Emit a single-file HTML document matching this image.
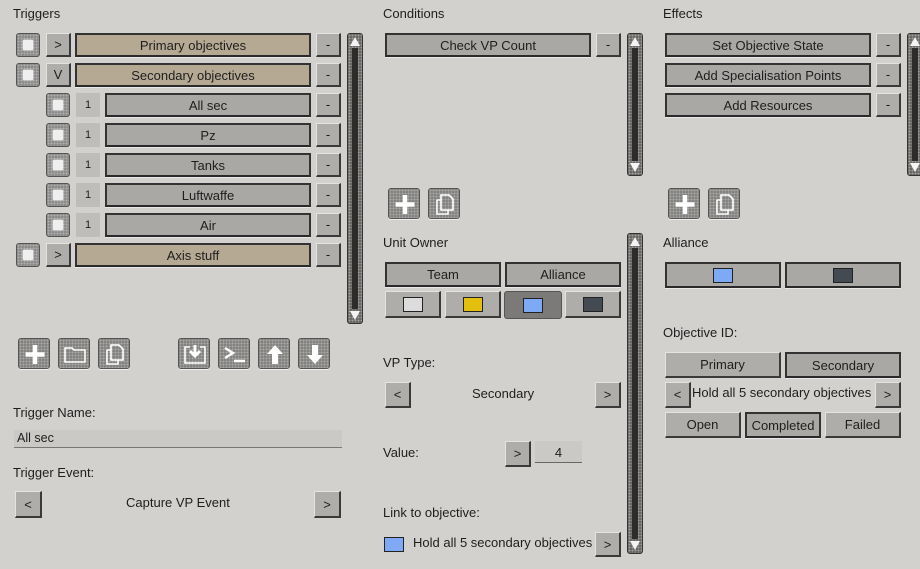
<!DOCTYPE html>
<html><head><meta charset="utf-8"><style>
body{margin:0;width:920px;height:569px;background:#d3d1ce;font-family:"Liberation Sans","DejaVu Sans",sans-serif;font-size:13px;color:#1e1e1e;position:relative;overflow:hidden}
div{box-sizing:border-box;position:absolute}
.l{white-space:nowrap}
.r{background:#aeadaa;border-top:1px solid #e4e3e0;border-left:1px solid #e4e3e0;border-right:2px solid #3a3a3a;border-bottom:2px solid #3a3a3a;text-align:center;display:flex;align-items:center;justify-content:center;white-space:nowrap}
.p{background:#a9a8a5;border:2px solid #333;border-bottom-color:#2a2a2a;box-shadow:0 1px 0 #e8e8e8;text-align:center;display:flex;align-items:center;justify-content:center;white-space:nowrap}
.t{background:#b6a993}
.d{background:#7b7a78;border-radius:3px}
.n{background:#bebdba;border:none;text-align:center;display:flex;align-items:center;justify-content:center;font-size:11px}
.cb{width:24px;height:24px;background:#858482;background-image:radial-gradient(#b0b0b0 1px,transparent 1.2px);background-size:3px 3px;border:1px solid #555;border-radius:3px}
.cb::after{content:"";position:absolute;left:6px;top:6px;width:10px;height:10px;background:#efefef;box-shadow:0 0 2px #fff}
.sb{width:16px;background:#5e5c58;background-image:radial-gradient(#a0a0a0 1px,transparent 1.2px);background-size:3px 3px;border:1px solid #333;border-radius:3px}
.sb::before{content:"";position:absolute;left:4px;top:14px;bottom:14px;width:6px;background:#2d2c2a}
.ua,.da{position:absolute;left:2px;width:0;height:0;border-left:5px solid transparent;border-right:5px solid transparent}
.ua{top:3px;border-bottom:9px solid #f4f4f4}
.da{bottom:3px;border-top:9px solid #f4f4f4}
.ic{width:32px;height:31px;background:#7a7976;background-image:radial-gradient(#aaa 1px,transparent 1.3px);background-size:3px 3px;border-radius:3px;border:1px solid #555;box-shadow:0 1px 0 #eee}
.ic svg{position:absolute;left:3px;top:3px}
.sw{width:20px;height:15px;border:1px solid #222}
</style></head><body>

<div class="l" style="left:13px;top:6px">Triggers</div>
<div class="l" style="left:383px;top:6px">Conditions</div>
<div class="l" style="left:663px;top:6px">Effects</div>

<div class="cb" style="left:16px;top:33px"></div><div class="r" style="left:46px;top:33px;width:25px;height:24px">&gt;</div><div class="p t" style="left:75px;top:33px;width:236px;height:24px">Primary objectives</div><div class="r" style="left:316px;top:33px;width:25px;height:24px">-</div>
<div class="cb" style="left:16px;top:63px"></div><div class="r" style="left:46px;top:63px;width:25px;height:24px">V</div><div class="p t" style="left:75px;top:63px;width:236px;height:24px">Secondary objectives</div><div class="r" style="left:316px;top:63px;width:25px;height:24px">-</div>

<div class="cb" style="left:46px;top:93px"></div><div class="n" style="left:76px;top:93px;width:24px;height:24px">1</div><div class="p" style="left:105px;top:93px;width:206px;height:24px">All sec</div><div class="r" style="left:316px;top:93px;width:25px;height:24px">-</div>
<div class="cb" style="left:46px;top:123px"></div><div class="n" style="left:76px;top:123px;width:24px;height:24px">1</div><div class="p" style="left:105px;top:123px;width:206px;height:24px">Pz</div><div class="r" style="left:316px;top:123px;width:25px;height:24px">-</div>
<div class="cb" style="left:46px;top:153px"></div><div class="n" style="left:76px;top:153px;width:24px;height:24px">1</div><div class="p" style="left:105px;top:153px;width:206px;height:24px">Tanks</div><div class="r" style="left:316px;top:153px;width:25px;height:24px">-</div>
<div class="cb" style="left:46px;top:183px"></div><div class="n" style="left:76px;top:183px;width:24px;height:24px">1</div><div class="p" style="left:105px;top:183px;width:206px;height:24px">Luftwaffe</div><div class="r" style="left:316px;top:183px;width:25px;height:24px">-</div>
<div class="cb" style="left:46px;top:213px"></div><div class="n" style="left:76px;top:213px;width:24px;height:24px">1</div><div class="p" style="left:105px;top:213px;width:206px;height:24px">Air</div><div class="r" style="left:316px;top:213px;width:25px;height:24px">-</div>
<div class="cb" style="left:16px;top:243px"></div><div class="r" style="left:46px;top:243px;width:25px;height:24px">&gt;</div><div class="p t" style="left:75px;top:243px;width:236px;height:24px">Axis stuff</div><div class="r" style="left:316px;top:243px;width:25px;height:24px">-</div>

<div class="sb" style="left:347px;top:33px;height:291px"><i class="ua"></i><i class="da"></i></div>

<div class="ic" style="left:18px;top:338px"><svg width="26" height="25"><path d="M13 3v19M3.5 12.5h19" stroke="#fff" stroke-width="4.5"/></svg></div>
<div class="ic" style="left:58px;top:338px"><svg width="26" height="25"><path d="M3 6h7l2 2h11v12H3z" fill="none" stroke="#fff" stroke-width="1.6"/></svg></div>
<div class="ic" style="left:98px;top:338px"><svg width="26" height="25"><path d="M9 3h8l4 4v11H9zM5 8h4M5 8v14h11v-4" fill="none" stroke="#fff" stroke-width="1.6"/></svg></div>
<div class="ic" style="left:178px;top:338px"><svg width="26" height="25"><path d="M8 5H3v16h20V5h-5" fill="none" stroke="#fff" stroke-width="1.6"/><path d="M13 3v10M8 9l5 5 5-5" fill="none" stroke="#fff" stroke-width="3"/></svg></div>
<div class="ic" style="left:218px;top:338px"><svg width="26" height="25"><path d="M3 6l8 5-8 5M12 19h11" fill="none" stroke="#fff" stroke-width="2.5"/></svg></div>
<div class="ic" style="left:258px;top:338px"><svg width="26" height="25"><path d="M13 3l-8 9h5v10h6V12h5z" fill="#fff"/></svg></div>
<div class="ic" style="left:298px;top:338px"><svg width="26" height="25"><path d="M13 22l-8-9h5V3h6v10h5z" fill="#fff"/></svg></div>

<div class="l" style="left:13px;top:405px">Trigger Name:</div>
<div style="left:14px;top:430px;width:328px;height:18px;background:#cbc9c6;border-bottom:1px solid #777;padding:1px 3px;font-size:12.5px">All sec</div>
<div class="l" style="left:13px;top:465px">Trigger Event:</div>
<div class="r" style="left:15px;top:491px;width:27px;height:27px">&lt;</div>
<div class="l" style="left:126px;top:495px">Capture VP Event</div>
<div class="r" style="left:314px;top:491px;width:27px;height:27px">&gt;</div>

<div class="p" style="left:385px;top:33px;width:206px;height:24px">Check VP Count</div><div class="r" style="left:596px;top:33px;width:25px;height:24px">-</div>
<div class="sb" style="left:627px;top:33px;height:143px"><i class="ua"></i><i class="da"></i></div>
<div class="ic" style="left:388px;top:188px"><svg width="26" height="25"><path d="M13 3v19M3.5 12.5h19" stroke="#fff" stroke-width="4.5"/></svg></div>
<div class="ic" style="left:428px;top:188px"><svg width="26" height="25"><path d="M9 3h8l4 4v11H9zM5 8h4M5 8v14h11v-4" fill="none" stroke="#fff" stroke-width="1.6"/></svg></div>

<div class="l" style="left:383px;top:235px">Unit Owner</div>
<div class="p" style="left:385px;top:262px;width:116px;height:25px">Team</div>
<div class="p" style="left:505px;top:262px;width:116px;height:25px">Alliance</div>
<div class="r" style="left:385px;top:291px;width:56px;height:27px"><div class="sw" style="position:static;background:#dcdcdc"></div></div>
<div class="r" style="left:445px;top:291px;width:56px;height:27px"><div class="sw" style="position:static;background:#e3c00f"></div></div>
<div class="r d" style="left:504px;top:291px;width:58px;height:28px;border:1px solid #555"><div class="sw" style="position:static;background:#7eaaf5"></div></div>
<div class="r" style="left:565px;top:291px;width:56px;height:27px"><div class="sw" style="position:static;background:#444a52"></div></div>
<div class="sb" style="left:627px;top:233px;height:321px"><i class="ua"></i><i class="da"></i></div>

<div class="l" style="left:383px;top:355px">VP Type:</div>
<div class="r" style="left:385px;top:382px;width:26px;height:26px">&lt;</div>
<div class="l" style="left:472px;top:386px">Secondary</div>
<div class="r" style="left:595px;top:382px;width:26px;height:26px">&gt;</div>
<div class="l" style="left:383px;top:445px">Value:</div>
<div class="r" style="left:505px;top:441px;width:26px;height:26px">&gt;</div>
<div style="left:535px;top:441px;width:47px;height:22px;background:#cbc9c6;border-bottom:1px solid #666;text-align:center;padding-top:4px">4</div>
<div class="l" style="left:383px;top:505px">Link to objective:</div>
<div class="sw" style="left:384px;top:537px;background:#7eaaf5"></div>
<div class="l" style="left:413px;top:535px">Hold all 5 secondary objectives</div>
<div class="r" style="left:595px;top:532px;width:26px;height:25px">&gt;</div>

<div class="p" style="left:665px;top:33px;width:206px;height:24px">Set Objective State</div><div class="r" style="left:876px;top:33px;width:25px;height:24px">-</div>
<div class="p" style="left:665px;top:63px;width:206px;height:24px">Add Specialisation Points</div><div class="r" style="left:876px;top:63px;width:25px;height:24px">-</div>
<div class="p" style="left:665px;top:93px;width:206px;height:24px">Add Resources</div><div class="r" style="left:876px;top:93px;width:25px;height:24px">-</div>
<div class="sb" style="left:907px;top:33px;height:143px"><i class="ua"></i><i class="da"></i></div>
<div class="ic" style="left:668px;top:188px"><svg width="26" height="25"><path d="M13 3v19M3.5 12.5h19" stroke="#fff" stroke-width="4.5"/></svg></div>
<div class="ic" style="left:708px;top:188px"><svg width="26" height="25"><path d="M9 3h8l4 4v11H9zM5 8h4M5 8v14h11v-4" fill="none" stroke="#fff" stroke-width="1.6"/></svg></div>

<div class="l" style="left:663px;top:235px">Alliance</div>
<div class="p" style="left:665px;top:262px;width:116px;height:26px"><div class="sw" style="position:static;background:#7eaaf5"></div></div>
<div class="p" style="left:785px;top:262px;width:116px;height:26px"><div class="sw" style="position:static;background:#444a52"></div></div>

<div class="l" style="left:663px;top:325px">Objective ID:</div>
<div class="r" style="left:665px;top:352px;width:116px;height:26px">Primary</div>
<div class="p" style="left:785px;top:352px;width:116px;height:26px">Secondary</div>
<div class="r" style="left:665px;top:382px;width:26px;height:26px">&lt;</div>
<div class="l" style="left:692px;top:385px">Hold all 5 secondary objectives</div>
<div class="r" style="left:875px;top:382px;width:26px;height:26px">&gt;</div>
<div class="r" style="left:665px;top:412px;width:76px;height:26px">Open</div>
<div class="p" style="left:745px;top:412px;width:76px;height:26px">Completed</div>
<div class="r" style="left:825px;top:412px;width:76px;height:26px">Failed</div>

</body></html>
